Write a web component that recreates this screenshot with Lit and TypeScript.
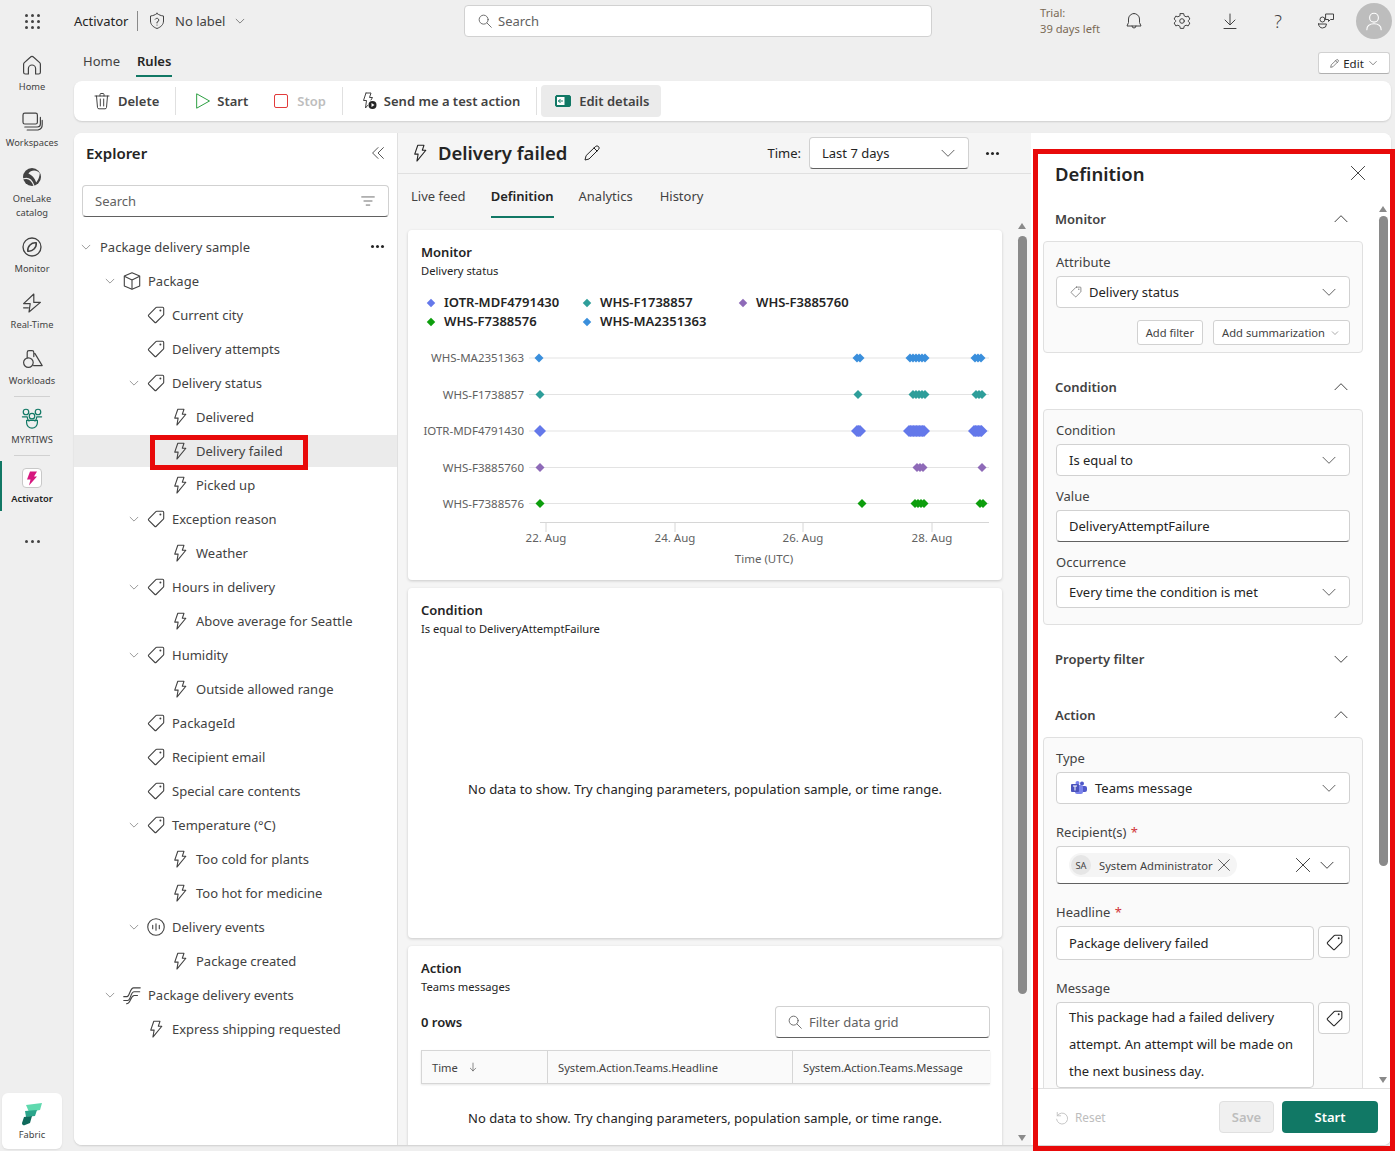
import { LitElement, html, css, svg } from "lit";
import { customElement } from "lit/decorators.js";

const ic = (p: unknown, size = 20, cls = "") =>
  html`<svg class="ic ${cls}" width=${size} height=${size} viewBox="0 0 20 20" fill="none" stroke="currentColor" stroke-width="1" stroke-linecap="round" stroke-linejoin="round">${p}</svg>`;

const P = {
  chevD: svg`<path d="M4.500 7.500 10 13l5.500-5.500" stroke-width=".9"/>`,
  chevU: svg`<path d="M4.500 12.500 10 7l5.500 5.500" stroke-width=".9"/>`,
  close: svg`<path d="m4 4 12 12M16 4 4 16" stroke-width=".9"/>`,
  bolt: svg`<path d="M8 3h5.600l-1.500 4.500h3.200L7.200 17.300 8.300 11H5.200z"/>`,
  tag: svg`<path d="M10.600 3H16a1 1 0 0 1 1 1v5.400a1 1 0 0 1-.3.700l-6.500 6.500a1 1 0 0 1-1.400 0l-5.400-5.400a1 1 0 0 1 0-1.400l6.500-6.500a1 1 0 0 1 .7-.3z"/><circle cx="14" cy="6" r=".9" fill="currentColor" stroke="none"/>`,
  cube: svg`<path d="M10 2.500 17 5.500v9l-7 3-7-3v-9z"/><path d="M3.500 6 10 9l6.500-3M10 9v8"/>`,
  stream: svg`<circle cx="10" cy="10" r="7.500"/><path d="M7 8.500v3M10 7v6M13 8.500v3"/>`,
  events: svg`<path d="M2.500 11.500h3c2.500 0 2.500-8 6-8h6M2.500 15h3.500c3 0 2.500-8 6-8h5M5 18c4 0 3.500-7.500 7-7.500h3"/>`,
  search: svg`<circle cx="8.500" cy="8.500" r="5"/><path d="m12.300 12.300 4.700 4.700"/>`,
  filter: svg`<path d="M3 5.500h14M5.500 10h9M8 14.500h4"/>`,
  dblL: svg`<path d="M10 4 4 10l6 6M16 4l-6 6 6 6"/>`,
  pencil: svg`<path d="M13.500 3.500a2 2 0 0 1 3 3L7 16l-4 1 1-4z"/><path d="m12 5 3 3"/>`,
  trash: svg`<path d="M3 5h14M8 5V3.500a1 1 0 0 1 1-1h2a1 1 0 0 1 1 1V5M4.500 5l1 11.500a1.500 1.500 0 0 0 1.500 1.300h6a1.500 1.500 0 0 0 1.500-1.300l1-11.500M8.300 8v7M11.700 8v7"/>`,
  play: svg`<path d="M4 3 16.500 10 4 17z"/>`,
  square: svg`<rect x="3.500" y="3.500" width="13" height="13" rx="1.500"/>`,
  boltPlay: svg`<path d="M7 2h5l-1.500 4.500h3L12 9M7 2 4.500 9.500h3L6.500 17l2-2.500"/><circle cx="13.500" cy="14" r="4" fill="#242424" stroke="none"/><path d="m12.500 12 3 2-3 2z" fill="#fff" stroke="none"/>`,
  details: svg`<rect x="2.500" y="4.500" width="15" height="11" rx="1.500" fill="#117865" stroke="#117865"/><rect x="4" y="6" width="7.500" height="8" fill="#fff" stroke="none"/><path d="M9.500 10H5.500M7.300 8.200 5.500 10l1.800 1.800" stroke="#117865"/>`,
  shield: svg`<path d="M10 2.500c2 1.500 4 2.200 6.500 2.500v5c0 3.500-2.500 6-6.500 7.500C6 16 3.500 13.500 3.500 10V5C6 4.700 8 4 10 2.500z"/><path d="M8.200 8.200A1.900 1.900 0 1 1 10 11v1"/><circle cx="10" cy="14" r=".6" fill="currentColor" stroke="none"/>`,
  bell: svg`<path d="M10 2.500a5.500 5.500 0 0 0-5.500 5.500v3.500L3 15h14l-1.500-3.500V8A5.500 5.500 0 0 0 10 2.500zM8 15a2 2 0 0 0 4 0"/>`,
  gear: svg`<circle cx="10" cy="10" r="2.300"/><path d="M8.300 2.600h3.400l.5 2.200 1.900 1 2.100-.7 1.700 2.900-1.600 1.500v1l1.600 1.500-1.700 2.900-2.100-.7-1.900 1-.5 2.200H8.300l-.5-2.200-1.900-1-2.100.7-1.700-2.900 1.600-1.500v-1L2.100 8l1.700-2.900 2.100.7 1.900-1z"/>`,
  down: svg`<path d="M10 3v10.500M5 9l5 5 5-5M4 17.500h12"/>`,
  feedback: svg`<circle cx="6.500" cy="8.500" r="2.500"/><path d="M2.500 13h8a4 4 0 0 1-8 0zM10 3h7.500v5.500h-3l-2 2v-2H10z"/>`,
  person: svg`<circle cx="10" cy="7" r="4"/><path d="M3.500 18c0-4 2.500-5.500 6.500-5.500s6.500 1.500 6.500 5.500"/>`,
  home: svg`<path d="M8.600 3.500a2 2 0 0 1 2.800 0l5 4.500a2 2 0 0 1 .6 1.500V16a1.500 1.500 0 0 1-1.500 1.500H13V13a3 3 0 0 0-6 0v4.500H4.500A1.500 1.500 0 0 1 3 16V9.500A2 2 0 0 1 3.600 8z"/>`,
  ws: svg`<rect x="2.500" y="3.500" width="12" height="9" rx="1.500"/><path d="M4 15h10.500a2.500 2.500 0 0 0 2.500-2.500V7M6 17.500h9a4.500 4.500 0 0 0 3.500-4.500V9.500"/>`,
  onelake: svg`<circle cx="10" cy="10" r="7.500" fill="#424242" stroke="none"/><path d="M7 7c2-3 7-3.500 9.500 0-.5 3-1 5-3 7.500C12.500 11 10 8.500 7 7z" fill="#efefef" stroke="none"/><path d="M3 11.500c3-1 6.500 0 8.500 5.500" stroke="#efefef"/>`,
  monitor: svg`<circle cx="10" cy="10" r="7.500" stroke-width="1.100"/><path d="M6.500 13.500c-.5-4 3-7.500 7-7 .5 4-3 7.500-7 7z" stroke-width="1.300"/>`,
  rt: svg`<path d="M11.500 2.500 3 10.500h5.500l-1 7 9.500-8h-5.500z"/><path d="M3 14h4"/>`,
  workloads: svg`<circle cx="7" cy="13" r="4"/><path d="M6 9V4.500A1.500 1.500 0 0 1 7.500 3H10a1.500 1.500 0 0 1 1.500 1.500V8M12.500 5.500 18.500 15.500H11.300"/>`,
  ws2: svg`<circle cx="5" cy="5" r="2.300"/><circle cx="15" cy="5" r="2.300"/><circle cx="10" cy="8.500" r="2.300"/><path d="M2 9h4c0 2 1 3 1.500 3.500M18 9h-4c0 2-1 3-1.500 3.500M5.500 12h9v2a4.500 4.500 0 0 1-9 0z"/>`,
  arrowD: svg`<path d="M10 3.500v13M5.500 12l4.500 4.500 4.500-4.500"/>`,
  reset: svg`<path d="M5 4v4h4"/><path d="M5 8a6.500 6.500 0 1 1-.8 4"/>`,
};

type Row = { l: number; t: string; i?: keyof typeof P; c?: boolean; sel?: boolean; more?: boolean };
const tree: Row[] = [
  { l: 0, t: "Package delivery sample", c: true, more: true },
  { l: 1, t: "Package", i: "cube", c: true },
  { l: 2, t: "Current city", i: "tag" },
  { l: 2, t: "Delivery attempts", i: "tag" },
  { l: 2, t: "Delivery status", i: "tag", c: true },
  { l: 3, t: "Delivered", i: "bolt" },
  { l: 3, t: "Delivery failed", i: "bolt", sel: true },
  { l: 3, t: "Picked up", i: "bolt" },
  { l: 2, t: "Exception reason", i: "tag", c: true },
  { l: 3, t: "Weather", i: "bolt" },
  { l: 2, t: "Hours in delivery", i: "tag", c: true },
  { l: 3, t: "Above average for Seattle", i: "bolt" },
  { l: 2, t: "Humidity", i: "tag", c: true },
  { l: 3, t: "Outside allowed range", i: "bolt" },
  { l: 2, t: "PackageId", i: "tag" },
  { l: 2, t: "Recipient email", i: "tag" },
  { l: 2, t: "Special care contents", i: "tag" },
  { l: 2, t: "Temperature (°C)", i: "tag", c: true },
  { l: 3, t: "Too cold for plants", i: "bolt" },
  { l: 3, t: "Too hot for medicine", i: "bolt" },
  { l: 2, t: "Delivery events", i: "stream", c: true },
  { l: 3, t: "Package created", i: "bolt" },
  { l: 1, t: "Package delivery events", i: "events", c: true },
  { l: 2, t: "Express shipping requested", i: "bolt" },
];

const COL = { iotr: "#6478ea", f1: "#2e9e9a", f3: "#8e6ab8", f7: "#0d9e0d", ma: "#3a8fdc" };
const series = [
  { n: "WHS-MA2351363", y: 358, c: COL.ma, r: 4.5, step: 3, sp: [[539, 539], [857, 862], [910, 926], [975, 981]] },
  { n: "WHS-F1738857", y: 394.5, c: COL.f1, r: 4.5, step: 3, sp: [[540, 540], [858, 860], [913, 925], [976, 983]] },
  { n: "IOTR-MDF4791430", y: 431, c: COL.iotr, r: 6, step: 1.5, sp: [[540, 540], [857, 861], [909, 925], [974, 982]] },
  { n: "WHS-F3885760", y: 467.5, c: COL.f3, r: 4.5, step: 3, sp: [[540, 540], [917, 925], [982, 982]] },
  { n: "WHS-F7388576", y: 503.5, c: COL.f7, r: 4.5, step: 3, sp: [[540, 540], [862, 862], [915, 924], [980, 983]] },
];
const legend = [
  ["IOTR-MDF4791430", COL.iotr],
  ["WHS-F1738857", COL.f1],
  ["WHS-F3885760", COL.f3],
  ["WHS-F7388576", COL.f7],
  ["WHS-MA2351363", COL.ma],
];

const diamonds = (c: string, y: number, r: number, step: number, a: number, b: number) => {
  const out = [];
  for (let x = a; x <= b; x += step) {
    out.push(svg`<path d="M${x - r} ${y}L${x} ${y - r}L${x + r} ${y}L${x} ${y + r}Z" fill=${c}/>`);
  }
  return out;
};

const chart = () => html`<svg class="chart" width="594" height="232" viewBox="408 340 594 232">
  ${series.map(
    (s) => svg`<text x="524" y=${s.y + 4} text-anchor="end" class="lbl">${s.n}</text>
      <line x1="529" x2="989" y1=${s.y} y2=${s.y} stroke="#e3e3e3"/>
      ${s.sp.map(([a, b]) => diamonds(s.c, s.y, s.r, s.step, a, b))}`
  )}
  <line x1="540" x2="989" y1="522.500" y2="522.500" stroke="#d6d6d6"/>
  ${[[546, "22. Aug"], [675, "24. Aug"], [803, "26. Aug"], [932, "28. Aug"]].map(
    ([x, t]) => svg`<line x1=${x} x2=${x} y1="522" y2="532" stroke="#d6d6d6"/>
      <text x=${x} y="542" text-anchor="middle" class="lbl">${t}</text>`
  )}
  <text x="764" y="563" text-anchor="middle" class="lbl">Time (UTC)</text>
</svg>`;

@customElement("app-root")
export class AppRoot extends LitElement {
  static styles = css`
    :host { display: block; width: 1395px; height: 1151px; overflow: hidden; font-family: "Noto Sans", "Open Sans", sans-serif; font-size: 13px; color: #242424; }
    * { box-sizing: border-box; }
    .ic { display: block; flex: none; }
    .app { position: relative; width: 1395px; height: 1151px; background: #efefef; display: flex; flex-direction: column; overflow: hidden; }
    .top { height: 42px; flex: none; display: flex; align-items: center; }
    .waffle { width: 64px; display: flex; justify-content: center; }
    .wgrid { display: grid; grid-template-columns: repeat(3, 3px); gap: 3px; }
    .wgrid i { width: 3px; height: 3px; border-radius: 50%; background: #424242; }
    .appn { margin-left: 10px; padding-right: 7px; width: 64px; border-right: 1px solid #8a8a8a; line-height: 20px; white-space: nowrap; }
    .lab { display: flex; align-items: center; margin-left: 9px; color: #424242; }
    .lab span { margin: 0 8px 0 8px; }
    .topsearch { position: absolute; left: 464px; top: 5px; width: 468px; height: 32px; background: #fff; border: 1px solid #d1d1d1; border-radius: 4px; display: flex; align-items: center; padding-left: 11px; gap: 4px; color: #616161; }
    .topright { margin-left: auto; display: flex; align-items: center; padding-right: 3px; color: #424242; }
    .trial { font-size: 11.200px; line-height: 16px; color: #7a6a55; width: 70px; }
    .tbtn { width: 48px; display: flex; justify-content: center; }
    .qm { font-size: 18px; font-weight: 300; line-height: 20px; }
    .avatar { width: 36px; height: 36px; border-radius: 50%; background: #bdbdbd; color: #fff; display: flex; align-items: center; justify-content: center; margin-left: 6px; }
    .main { flex: 1; display: flex; min-height: 0; }

    .rail { width: 64px; flex: none; display: flex; flex-direction: column; align-items: stretch; padding-top: 11px; padding-bottom: 2px; position: relative; }
    .ri { display: flex; flex-direction: column; align-items: center; color: #424242; padding-bottom: 15px; }
    .ri .lb { margin-top: 3px; font-size: 9.300px; line-height: 14px; text-align: center; color: #424242; }
    .ri.tight { padding-bottom: 8px; }
    .rdiv { height: 1px; background: #d1d1d1; margin: 0 14px 9px; flex: none; }
    .ri.act { padding: 5px 2px 5px 0; margin-top: -4px; border-left: 2px solid #117865; }
    .ri.act .lb { margin-top: 3px; font-weight: 600; color: #242424; }
    .actic { width: 20px; height: 20px; margin: 2px 0 1px; background: #fff; border: 1px solid #c8c8c8; border-radius: 4px; display: flex; align-items: center; justify-content: center; }
    .green { color: #117865; }
    .rdots { display: flex; justify-content: center; gap: 3px; margin-top: 29px; }
    .rdots i { width: 3px; height: 3px; border-radius: 50%; background: #424242; }
    .fabric { margin: auto 2px 0; height: 56px; width: 60px; background: #fff; border-radius: 6px; display: flex; flex-direction: column; align-items: center; padding-top: 9px; font-size: 9.300px; line-height: 14px; box-shadow: 0 1px 2px rgba(0,0,0,.08); color: #424242; }
    .fabric svg { margin-bottom: 2px; }

    .content { flex: 1; margin: 0 4px 0 10px; min-width: 0; display: flex; flex-direction: column; padding-bottom: 6px; }
    .nav { height: 39px; flex: none; display: flex; align-items: flex-start; padding: 9px 0 0 8px; gap: 15px; }
    .nav .n { height: 26px; line-height: 20px; color: #424242; border-bottom: 2px solid transparent; padding: 0 1px; }
    .nav .n.on { font-weight: 600; color: #242424; border-bottom-color: #117865; }
    .edit { margin-left: auto; margin-right: 1px; margin-top: 1px; width: 72px; height: 22px; border: 1px solid #d1d1d1; border-bottom-color: #b0b0b0; background: #fff; border-radius: 3px; display: flex; align-items: center; justify-content: center; gap: 3px; font-size: 11.500px; }
    .toolbar { height: 40px; flex: none; background: #fff; border-radius: 8px; box-shadow: 0 1px 2px rgba(0,0,0,.14); display: flex; align-items: center; padding-left: 18px; font-weight: 600; color: #424242; white-space: nowrap; }
    .tb { display: flex; align-items: center; gap: 6px; }
    .tsep { width: 1px; height: 28px; background: #e0e0e0; margin: 0 16px; flex: none; }
    .tb.start-a { gap: 4px; margin-left: 1px; }
    .tb.start-a .ic { color: #2ea043; }
    .tb.stop-a { margin-left: 23px; color: #bdbdbd; }
    .tb.stop-a .ic { color: #e23b3b; }
    .tb.send-a { gap: 5px; }
    .editd { background: #ebebeb; height: 32px; border-radius: 4px; padding: 0 12px 0 12px; width: 120px; margin-left: -12px; flex: none; }
    .editd.tb { gap: 6px; }

    .panels { flex: 1; margin-top: 12px; min-height: 0; display: flex; border-radius: 8px; overflow: hidden; background: #fff; box-shadow: 0 1px 2px rgba(0,0,0,.14); }
    .explorer { width: 324px; flex: none; background: #fff; border-right: 1px solid #e0e0e0; }
    .exhead { height: 40px; display: flex; align-items: center; justify-content: space-between; padding: 0 10px 0 12px; font-size: 15px; font-weight: 600; }
    .exhead .ic { color: #424242; }
    .exsearch { margin: 12px 8px 13px; height: 32px; border: 1px solid #d1d1d1; border-bottom-color: #616161; border-radius: 4px; display: flex; align-items: center; justify-content: space-between; padding: 0 11px 0 12px; color: #616161; }
    .row { height: 34px; display: flex; align-items: center; position: relative; color: #424242; white-space: nowrap; }
    .row.sel { background: #ebebeb; height: 32px; margin: 1px 0; }
    .row.l0 { padding-left: 4px; } .row.l1 { padding-left: 28px; } .row.l2 { padding-left: 52px; } .row.l3 { padding-left: 76px; }
    .cv { width: 16px; flex: none; display: flex; justify-content: center; color: #616161; }
    .ri2 { margin-left: 3px; margin-right: 5px; color: #424242; }
    .l0 .cv { margin-right: 6px; }
    .more { position: absolute; right: 13px; top: 15px; display: flex; gap: 2px; }
    .more i, .dots3 i { width: 3px; height: 3px; border-radius: 50%; background: #242424; display: block; }
    .redsm { position: absolute; left: 76px; top: 0; width: 158px; height: 35px; border: 5px solid #e80a0a; pointer-events: none; }

    .center { width: 633px; flex: none; background: #f5f5f5; display: flex; flex-direction: column; min-width: 0; }
    .chead { height: 41px; flex: none; border-bottom: 1px solid #e0e0e0; display: flex; align-items: center; padding: 0 0 0 11px; }
    .ctitle { font-size: 18.500px; font-weight: 600; margin-left: 7px; margin-right: 15px; line-height: 26px; }
    .chead .time { margin-left: auto; margin-right: 8px; color: #242424; }
    .sel160 { width: 160px; height: 32px; background: #fff; border: 1px solid #d1d1d1; border-bottom-color: #616161; border-radius: 4px; display: flex; align-items: center; justify-content: space-between; padding: 0 9px 0 12px; flex: none; }
    .sel160 .ic { color: #616161; }
    .dots3 { display: flex; gap: 2px; margin-left: 17px; margin-right: 32px; }
    .ctabs { height: 45px; flex: none; display: flex; gap: 25px; padding-left: 13px; }
    .ctabs div { height: 44px; padding-top: 12px; line-height: 20px; color: #424242; }
    .ctabs div:last-child { margin-left: 2px; }
    .ctabs .on { font-weight: 600; color: #242424; border-bottom: 2px solid #117865; }
    .cbody { flex: 1; min-height: 0; display: flex; padding-left: 10px; overflow: hidden; padding-top: 11px; }
    .cards { width: 594px; flex: none; display: flex; flex-direction: column; gap: 8px; }
    .card { background: #fff; border-radius: 4px; box-shadow: 0 1px 3px rgba(0,0,0,.18); flex: none; }
    .card.h { height: 350px; }
    .card.a { padding-bottom: 40px; }
    .chd { padding: 13px 13px 0; }
    .cht { font-weight: 600; line-height: 18px; }
    .chs { font-size: 11.200px; line-height: 20px; }
    .legend { display: grid; grid-template-columns: repeat(3, 156px); padding: 12px 0 0 20px; font-weight: 600; line-height: 19px; }
    .legend div { display: flex; align-items: center; gap: 10px; }
    .legend i { width: 6px; height: 6px; transform: rotate(45deg); display: block; background: var(--c); }
    .chart { display: block; margin-top: 9px; }
    .lbl { font-size: 11.500px; fill: #616161; font-family: "Noto Sans", sans-serif; }
    .nodata { height: 304px; display: flex; align-items: center; justify-content: center; color: #242424; margin-top: -2px; }
    .a-top { display: flex; justify-content: space-between; align-items: center; padding: 0 12px 0 13px; margin-top: 9px; }
    .rows { font-weight: 600; }
    .flt { width: 215px; height: 32px; border: 1px solid #d1d1d1; border-bottom-color: #616161; border-radius: 4px; display: flex; align-items: center; gap: 5px; padding-left: 10px; color: #616161; }
    .tbl { margin: 12px 12px 0 13px; height: 34px; display: grid; grid-template-columns: 126px 245px 198px; background: #fafafa; border-top: 1px solid #d6d6d6; border-bottom: 1px solid #d6d6d6; box-shadow: 0 1px 2px rgba(0,0,0,.1); font-size: 11.200px; color: #424242; }
    .tbl div { display: flex; align-items: center; padding-left: 10px; border-left: 1px solid #d6d6d6; gap: 9px; white-space: nowrap; }
    .nd2 { text-align: center; margin-top: 25px; }
    .sbar { width: 10px; flex: none; margin-left: 15px; display: flex; flex-direction: column; align-items: center; }
    .up { width: 0; height: 0; border: 4.500px solid transparent; border-top: 0; border-bottom: 6px solid #8a8a8a; flex: none; }
    .dn { width: 0; height: 0; border: 4.500px solid transparent; border-bottom: 0; border-top: 6px solid #8a8a8a; flex: none; margin-top: auto; }
    .thumb { width: 9px; border-radius: 5px; background: #8a8a8a; flex: none; margin-top: 4px; }
    .cbar { margin-bottom: 4px; margin-top: -7px; }
    .cbar .thumb { height: 758px; margin-top: 7px; }

    .right { flex: 1; min-width: 0; background: #fff; display: flex; flex-direction: column; }
    .rhead { height: 64px; flex: none; display: flex; align-items: flex-end; justify-content: space-between; padding: 0 22px 10px 24px; line-height: 26px; font-size: 18.500px; font-weight: 600; color: #242424; margin-bottom: 8px; }
    .rhead .ic { margin-bottom: 3px; color: #424242; }
    .rscroll { flex: 1; min-height: 0; display: flex; border-bottom: 1px solid #e0e0e0; }
    .rcol { width: 332px; flex: none; overflow: hidden; }
    .sh { height: 28px; display: flex; align-items: center; justify-content: space-between; padding: 0 11px 0 24px; font-weight: 600; color: #424242; }
    .sgap { height: 28px; }
    .box { margin: 8px 0 20px 12px; width: 320px; background: #fafafa; border: 1px solid #e0e0e0; border-radius: 4px; padding: 10px 12px 0; }
    .box.pb { padding-bottom: 16px; }
    .box.last { margin-bottom: 0; height: 400px; }
    .fl { height: 20px; line-height: 20px; color: #424242; margin-bottom: 4px; }
    .fl b { color: #d13438; font-weight: 400; margin-left: 1px; }
    .inp { height: 32px; background: #fff; border: 1px solid #d1d1d1; border-radius: 4px; display: flex; align-items: center; justify-content: space-between; padding: 0 9px 0 12px; color: #242424; }
    .inp.ul { border-bottom-color: #616161; }
    .inp .ic { color: #616161; }
    .inl { display: flex; align-items: center; gap: 6px; }
    .inl.teams { gap: 8px; }
    .teams svg { margin-left: 2px; }
    .inp + .fl { margin-top: 10px; }
    .btns { display: flex; justify-content: flex-end; gap: 10px; margin-top: 12px; padding-bottom: 7px; }
    .mini { height: 25px; padding: 0 8px; border: 1px solid #d1d1d1; background: #fff; border-radius: 3px; display: flex; align-items: center; gap: 4px; font-size: 11.200px; color: #424242; white-space: nowrap; }
    .mini.dd { gap: 5px; padding-right: 9px; }
    .gap18 { margin-top: 18px !important; }
    .multi { height: 38px; padding: 0 11px 0 12px; }
    .chip { height: 24px; background: #f5f5f5; border-radius: 12px; display: flex; align-items: center; padding: 0 4px 0 2px; gap: 8px; font-size: 11.200px; color: #424242; }
    .chip em { width: 20px; height: 20px; border-radius: 50%; background: #e6e6e6; font-style: normal; font-size: 9.300px; display: flex; align-items: center; justify-content: center; }
    .chip .ic { margin-left: -6px; color: #424242 !important; }
    .clr { gap: 2px; }
    .clr .ic { color: #424242; }
    .two { display: flex; gap: 4px; align-items: flex-start; }
    .two .inp { width: 258px; height: 34px; flex: none; }
    .tagb { width: 32px; height: 32px; background: #fff; border: 1px solid #d1d1d1; border-radius: 4px; display: flex; align-items: center; justify-content: center; color: #242424; flex: none; }
    .ta { display: block; width: 258px; height: 86px; background: #fff; border: 1px solid #d1d1d1; border-radius: 4px; padding: 1px 12px; line-height: 27px; }
    .rbar { margin-left: 15px; padding: 1px 0 5px; }
    .rbar .thumb { height: 650px; }
    .foot { height: 56px; flex: none; display: flex; align-items: center; padding: 0 13px 0 22px; }
    .reset { display: flex; align-items: center; gap: 5px; color: #bdbdbd; font-size: 11.800px; }
    .save { margin-left: auto; width: 55px; height: 32px; background: #f0f0f0; border: 1px solid #e0e0e0; border-radius: 4px; display: flex; align-items: center; justify-content: center; color: #bdbdbd; font-weight: 600; }
    .start { margin-left: 8px; width: 96px; height: 32px; background: #117865; border-radius: 4px; display: flex; align-items: center; justify-content: center; color: #fff; font-weight: 600; }
    .redbig { position: absolute; left: 1033px; top: 149px; width: 362px; height: 1002px; border: 5px solid #e80a0a; pointer-events: none; }
  `;

  private row(r: Row) {
    return html`<div class="row l${r.l} ${r.sel ? "sel" : ""}">
      <span class="cv">${r.c ? ic(P.chevD, 14) : ""}</span>
      ${r.i ? html`<span class="ri2">${ic(P[r.i], 22)}</span>` : ""}
      <span>${r.t}</span>
      ${r.more ? html`<span class="more"><i></i><i></i><i></i></span>` : ""}
      ${r.sel ? html`<span class="redsm"></span>` : ""}
    </div>`;
  }

  private railItem(icon: unknown, label: unknown, cls = "") {
    return html`<div class="ri ${cls}">${icon}<div class="lb">${label}</div></div>`;
  }

  render() {
    return html`<div class="app">
      <header class="top">
        <div class="waffle"><div class="wgrid">${Array.from({ length: 9 }, () => html`<i></i>`)}</div></div>
        <div class="appn">Activator</div>
        <div class="lab">${ic(P.shield, 20)}<span>No label</span>${ic(P.chevD, 14)}</div>
        <div class="topsearch">${ic(P.search, 18)}<span>Search</span></div>
        <div class="topright">
          <div class="trial">Trial:<br />39 days left</div>
          <div class="tbtn">${ic(P.bell)}</div>
          <div class="tbtn">${ic(P.gear)}</div>
          <div class="tbtn">${ic(P.down)}</div>
          <div class="tbtn"><span class="qm">?</span></div>
          <div class="tbtn">${ic(P.feedback)}</div>
          <div class="avatar">${ic(P.person, 22)}</div>
        </div>
      </header>
      <div class="main">
        <nav class="rail">
          ${this.railItem(ic(P.home, 24), "Home")}
          ${this.railItem(ic(P.ws, 24), "Workspaces")}
          ${this.railItem(ic(P.onelake, 24), html`OneLake<br />catalog`)}
          ${this.railItem(ic(P.monitor, 24), "Monitor")}
          ${this.railItem(ic(P.rt, 24), "Real-Time")}
          ${this.railItem(ic(P.workloads, 24), "Workloads", "tight")}
          <div class="rdiv"></div>
          ${this.railItem(html`<span class="green">${ic(P.ws2, 24)}</span>`, "MYRTIWS", "tight")}
          <div class="rdiv"></div>
          ${this.railItem(
            html`<div class="actic"><svg width="12" height="15" viewBox="0 0 12 14"><path d="M4 0h7L8 5h3L3 14l1.500-6H1z" fill="#d6187f"/></svg></div>`,
            "Activator",
            "act"
          )}
          <div class="rdots"><i></i><i></i><i></i></div>
          <div class="fabric">
            <svg width="22" height="24" viewBox="0 0 22 24"><path d="M5 3 21 1l-2 7-11 2z" fill="#5fd9ae"/><path d="M4 9l12-1-2 6-9 1z" fill="#2ba58b"/><path d="M3 15l8-1-2 7-5 2a2 2 0 0 1-3-2z" fill="#0f6a5c"/></svg>
            Fabric
          </div>
        </nav>
        <div class="content">
          <div class="nav">
            <div class="n">Home</div>
            <div class="n on">Rules</div>
            <div class="edit">${ic(P.pencil, 11)}Edit${ic(P.chevD, 12)}</div>
          </div>
          <div class="toolbar">
            <div class="tb">${ic(P.trash, 20)}<span>Delete</span></div>
            <div class="tsep"></div>
            <div class="tb start-a">${ic(P.play)}<span>Start</span></div>
            <div class="tb stop-a">${ic(P.square)}<span>Stop</span></div>
            <div class="tsep"></div>
            <div class="tb send-a">${ic(P.boltPlay)}<span>Send me a test action</span></div>
            <div class="tsep"></div>
            <div class="tb editd">${ic(P.details)}<span>Edit details</span></div>
          </div>
          <div class="panels">
            <aside class="explorer">
              <div class="exhead"><span>Explorer</span>${ic(P.dblL, 18)}</div>
              <div class="exsearch"><span>Search</span>${ic(P.filter, 18)}</div>
              ${tree.map((r) => this.row(r))}
            </aside>
            <section class="center">
              <div class="chead">
                ${ic(P.bolt, 22)}
                <span class="ctitle">Delivery failed</span>
                ${ic(P.pencil, 20)}
                <span class="time">Time:</span>
                <div class="sel160"><span>Last 7 days</span>${ic(P.chevD, 22)}</div>
                <div class="dots3"><i></i><i></i><i></i></div>
              </div>
              <div class="ctabs">
                <div>Live feed</div><div class="on">Definition</div><div>Analytics</div><div>History</div>
              </div>
              <div class="cbody">
                <div class="cards">
                  <div class="card h">
                    <div class="chd"><div class="cht">Monitor</div><div class="chs">Delivery status</div></div>
                    <div class="legend">
                      ${legend.map(([n, c]) => html`<div><i style="--c:${c}"></i><span>${n}</span></div>`)}
                    </div>
                    ${chart()}
                  </div>
                  <div class="card h">
                    <div class="chd"><div class="cht">Condition</div><div class="chs">Is equal to DeliveryAttemptFailure</div></div>
                    <div class="nodata">No data to show. Try changing parameters, population sample, or time range.</div>
                  </div>
                  <div class="card a">
                    <div class="chd"><div class="cht">Action</div><div class="chs">Teams messages</div></div>
                    <div class="a-top"><span class="rows">0 rows</span><div class="flt">${ic(P.search, 18)}<span>Filter data grid</span></div></div>
                    <div class="tbl">
                      <div>Time ${ic(P.arrowD, 12)}</div><div>System.Action.Teams.Headline</div><div>System.Action.Teams.Message</div>
                    </div>
                    <div class="nd2">No data to show. Try changing parameters, population sample, or time range.</div>
                  </div>
                </div>
                <div class="sbar cbar"><div class="up"></div><div class="thumb"></div><div class="dn"></div></div>
              </div>
            </section>
            <section class="right">
              <div class="rhead"><span>Definition</span>${ic(P.close, 22)}</div>
              <div class="rscroll">
                <div class="rcol">
                  <div class="sh"><span>Monitor</span>${ic(P.chevU, 22)}</div>
                  <div class="box">
                    <div class="fl">Attribute</div>
                    <div class="inp"><span class="inl">${ic(P.tag, 14)}<span>Delivery status</span></span>${ic(P.chevD, 22)}</div>
                    <div class="btns"><div class="mini">Add filter</div><div class="mini dd">Add summarization ${ic(P.chevD, 10)}</div></div>
                  </div>
                  <div class="sh"><span>Condition</span>${ic(P.chevU, 22)}</div>
                  <div class="box pb">
                    <div class="fl">Condition</div>
                    <div class="inp"><span>Is equal to</span>${ic(P.chevD, 22)}</div>
                    <div class="fl">Value</div>
                    <div class="inp ul"><span>DeliveryAttemptFailure</span></div>
                    <div class="fl">Occurrence</div>
                    <div class="inp"><span>Every time the condition is met</span>${ic(P.chevD, 22)}</div>
                  </div>
                  <div class="sh"><span>Property filter</span>${ic(P.chevD, 22)}</div>
                  <div class="sgap"></div>
                  <div class="sh"><span>Action</span>${ic(P.chevU, 22)}</div>
                  <div class="box last">
                    <div class="fl">Type</div>
                    <div class="inp">
                      <span class="inl teams">
                        <svg width="16" height="14" viewBox="0 0 16 14"><circle cx="11" cy="2.500" r="2" fill="#5059c9"/><circle cx="6.500" cy="2" r="2" fill="#7b83eb"/><rect x="9" y="5" width="7" height="6" rx="2" fill="#5059c9"/><rect x="4" y="4" width="8" height="9" rx="2" fill="#7b83eb"/><rect x="0" y="3" width="8" height="8" rx="1" fill="#4b53bc"/><path d="M2 5h4M4 5v4.500" stroke="#fff"/></svg>
                        <span>Teams message</span>
                      </span>${ic(P.chevD, 22)}
                    </div>
                    <div class="fl gap18">Recipient(s) <b>*</b></div>
                    <div class="inp ul multi">
                      <div class="chip"><em>SA</em><span>System Administrator</span>${ic(P.close, 18)}</div>
                      <span class="inl clr">${ic(P.close, 22)}${ic(P.chevD, 22)}</span>
                    </div>
                    <div class="fl gap18">Headline <b>*</b></div>
                    <div class="two"><div class="inp"><span>Package delivery failed</span></div><div class="tagb">${ic(P.tag, 21)}</div></div>
                    <div class="fl gap18">Message</div>
                    <div class="two"><div class="ta">This package had a failed delivery attempt. An attempt will be made on the next business day.</div><div class="tagb">${ic(P.tag, 21)}</div></div>
                  </div>
                </div>
                <div class="sbar rbar"><div class="up"></div><div class="thumb"></div><div class="dn"></div></div>
              </div>
              <div class="foot">
                <div class="reset">${ic(P.reset, 17)}<span>Reset</span></div>
                <div class="save">Save</div>
                <div class="start">Start</div>
              </div>
            </section>
          </div>
        </div>
      </div>
      <div class="redbig"></div>
    </div>`;
  }
}
